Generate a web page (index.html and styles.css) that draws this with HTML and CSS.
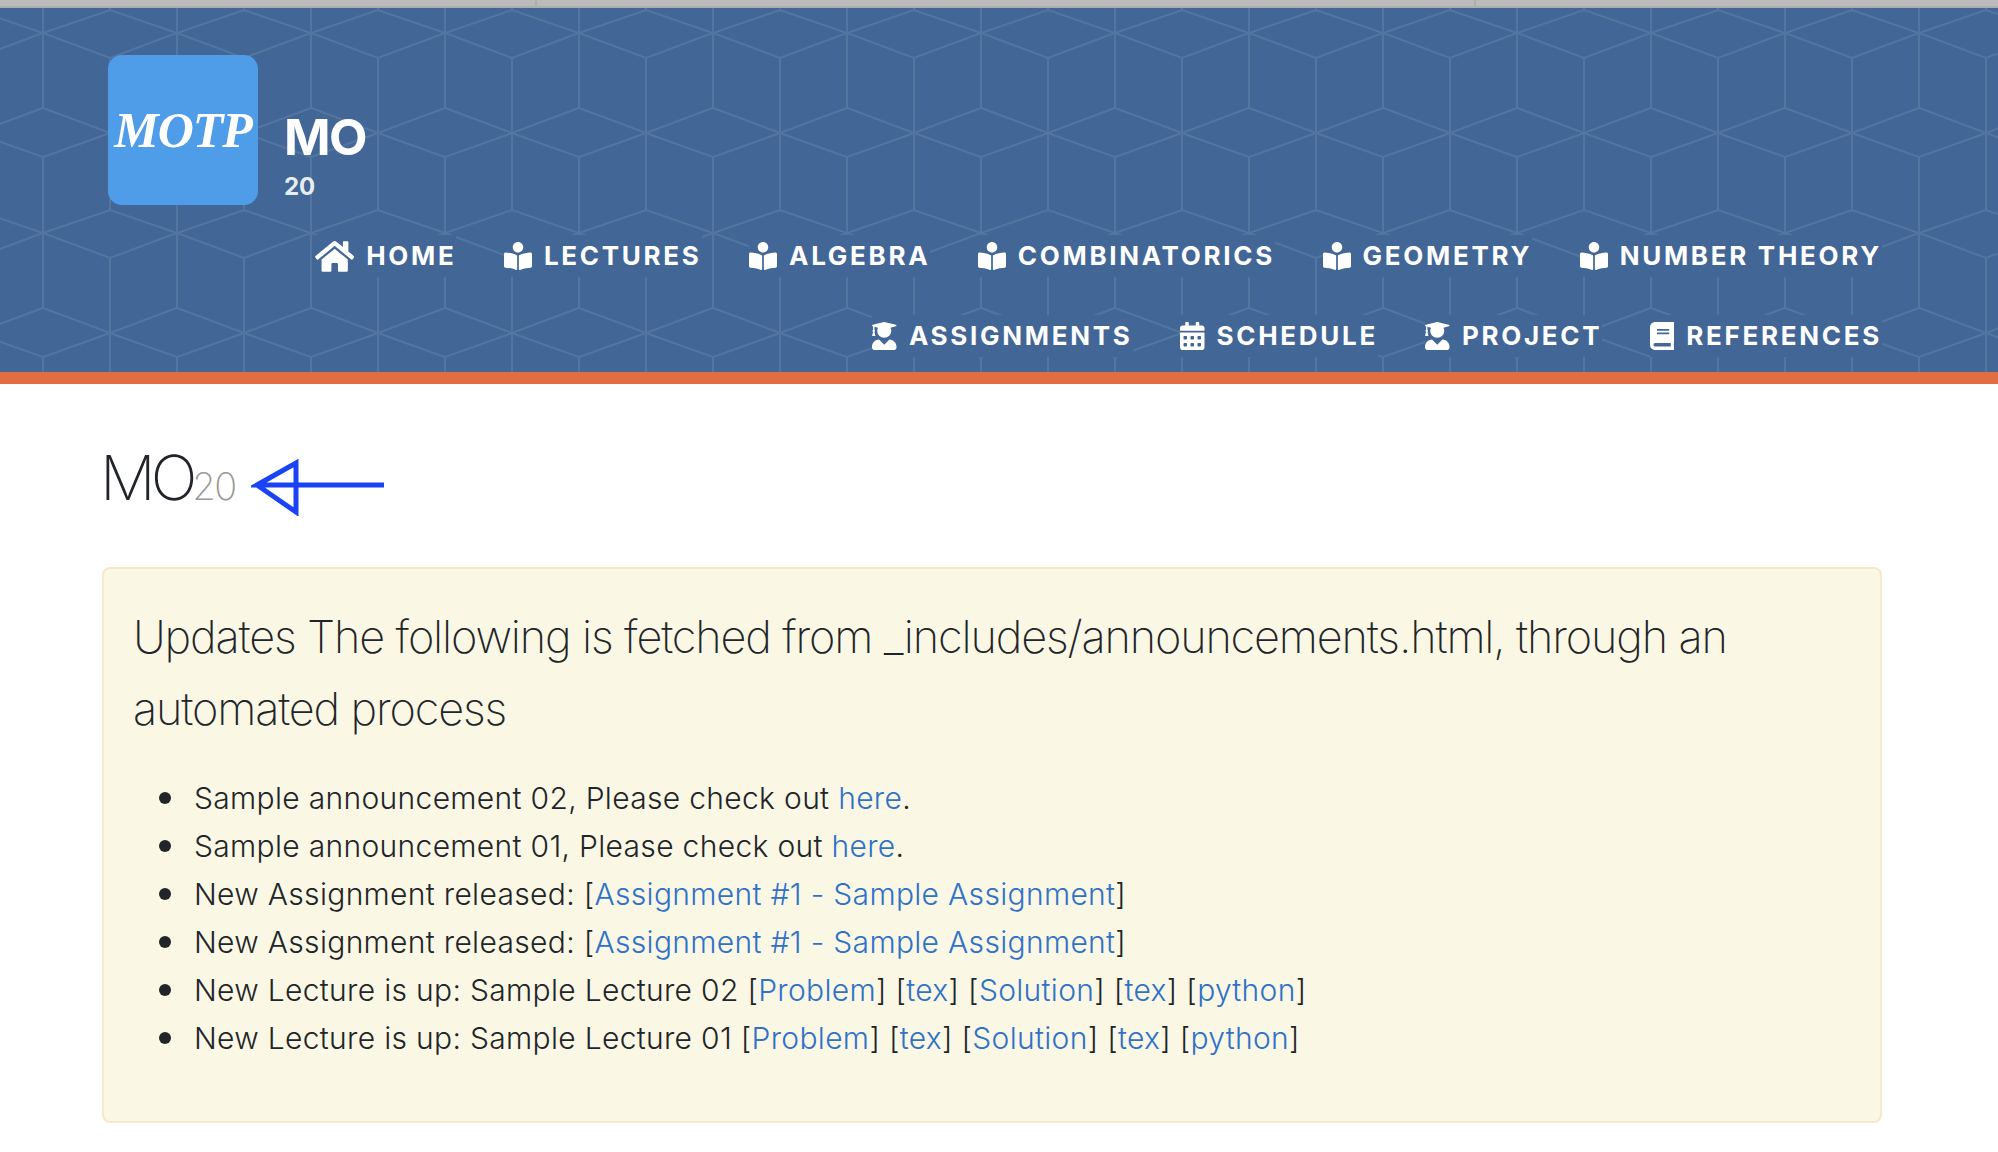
FILE: index.html
```html
<!DOCTYPE html>
<html lang="en">

<head>
    <meta charset="UTF-8">
    <title>MO20</title>
    <link rel="stylesheet" href="styles.css">
</head>

<body>
    <div class="tabstrip">
        <div class="tab tab-first"></div>
        <div class="tab tab-second"></div>
    </div>

    <header class="masthead">
        <div class="brand">
            <div class="logo">MOTP</div>
            <div class="brand-text">
                <div class="brand-title">MO</div>
                <div class="brand-sub">20</div>
            </div>
        </div>

        <nav class="nav">
            <div class="nav-row">
                <a class="nav-link" href="#">
                    <svg class="icon icon-home" viewBox="0 0 576 512"><path d="M280.37 148.26L96 300.11V464a16 16 0 0 0 16 16l112.06-.29a16 16 0 0 0 15.92-16V368a16 16 0 0 1 16-16h64a16 16 0 0 1 16 16v95.64a16 16 0 0 0 16 16.05L464 480a16 16 0 0 0 16-16V300L295.67 148.26a12.19 12.19 0 0 0-15.3 0zM571.6 251.47L488 182.56V44.05a12 12 0 0 0-12-12h-56a12 12 0 0 0-12 12v72.61L318.47 43a48 48 0 0 0-61 0L4.34 251.47a12 12 0 0 0-1.6 16.9l25.5 31A12 12 0 0 0 45.15 301l235.22-193.74a12.19 12.19 0 0 1 15.3 0L530.9 301a12 12 0 0 0 16.9-1.6l25.5-31a12 12 0 0 0-1.7-16.93z"/></svg>
                    HOME
                </a>
                <a class="nav-link" href="#">
                    <svg class="icon" viewBox="0 0 512 512"><use href="#reader"/></svg>
                    LECTURES
                </a>
                <a class="nav-link" href="#">
                    <svg class="icon" viewBox="0 0 512 512"><use href="#reader"/></svg>
                    ALGEBRA
                </a>
                <a class="nav-link" href="#">
                    <svg class="icon" viewBox="0 0 512 512"><use href="#reader"/></svg>
                    COMBINATORICS
                </a>
                <a class="nav-link" href="#">
                    <svg class="icon" viewBox="0 0 512 512"><use href="#reader"/></svg>
                    GEOMETRY
                </a>
                <a class="nav-link" href="#">
                    <svg class="icon" viewBox="0 0 512 512"><use href="#reader"/></svg>
                    NUMBER THEORY
                </a>
            </div>
            <div class="nav-row">
                <a class="nav-link" href="#">
                    <svg class="icon" viewBox="0 0 448 512"><use href="#graduate"/></svg>
                    ASSIGNMENTS
                </a>
                <a class="nav-link" href="#">
                    <svg class="icon" viewBox="0 0 448 512"><path d="M0 464c0 26.5 21.5 48 48 48h352c26.5 0 48-21.5 48-48V192H0v272zm320-196c0-6.6 5.4-12 12-12h40c6.6 0 12 5.4 12 12v40c0 6.6-5.4 12-12 12h-40c-6.6 0-12-5.4-12-12v-40zm0 128c0-6.6 5.4-12 12-12h40c6.6 0 12 5.4 12 12v40c0 6.6-5.4 12-12 12h-40c-6.6 0-12-5.4-12-12v-40zM192 268c0-6.6 5.4-12 12-12h40c6.6 0 12 5.4 12 12v40c0 6.6-5.4 12-12 12h-40c-6.6 0-12-5.4-12-12v-40zm0 128c0-6.6 5.4-12 12-12h40c6.6 0 12 5.4 12 12v40c0 6.6-5.4 12-12 12h-40c-6.6 0-12-5.4-12-12v-40zM64 268c0-6.6 5.4-12 12-12h40c6.6 0 12 5.4 12 12v40c0 6.6-5.4 12-12 12H76c-6.6 0-12-5.4-12-12v-40zm0 128c0-6.6 5.4-12 12-12h40c6.6 0 12 5.4 12 12v40c0 6.6-5.4 12-12 12H76c-6.6 0-12-5.4-12-12v-40zM400 64h-48V16c0-8.8-7.2-16-16-16h-32c-8.8 0-16 7.2-16 16v48H160V16c0-8.8-7.2-16-16-16h-32c-8.8 0-16 7.2-16 16v48H48C21.5 64 0 85.5 0 112v48h448v-48c0-26.5-21.5-48-48-48z"/></svg>
                    SCHEDULE
                </a>
                <a class="nav-link" href="#">
                    <svg class="icon" viewBox="0 0 448 512"><use href="#graduate"/></svg>
                    PROJECT
                </a>
                <a class="nav-link" href="#">
                    <svg class="icon" viewBox="0 0 448 512"><path d="M448 360V24c0-13.3-10.7-24-24-24H96C43 0 0 43 0 96v320c0 53 43 96 96 96h328c13.3 0 24-10.7 24-24v-16c0-7.5-3.5-14.3-8.9-18.7-4.2-15.4-4.2-59.3 0-74.7 5.4-4.3 8.9-11.1 8.9-18.6zM128 134c0-3.3 2.7-6 6-6h212c3.3 0 6 2.7 6 6v20c0 3.3-2.7 6-6 6H134c-3.3 0-6-2.7-6-6v-20zm0 64c0-3.3 2.7-6 6-6h212c3.3 0 6 2.7 6 6v20c0 3.3-2.7 6-6 6H134c-3.3 0-6-2.7-6-6v-20zm253.4 250H96c-17.7 0-32-14.3-32-32 0-17.6 14.4-32 32-32h285.4c-1.9 17.1-1.9 46.9 0 64z"/></svg>
                    REFERENCES
                </a>
            </div>
        </nav>
    </header>

    <main class="content">
        <div class="page-heading">
            <h1 class="page-title">MO<small>20</small></h1>
            <svg class="arrow" viewBox="0 0 140 77">
                <path d="M133 46H6L45 24V73L6 46"/>
            </svg>
        </div>

        <section class="notice">
            <p class="lead">Updates The following is fetched from _includes/announcements.html, through an automated process</p>
            <ul class="updates">
                <li>Sample announcement 02, Please check out <a href="#">here</a>.</li>
                <li>Sample announcement 01, Please check out <a href="#">here</a>.</li>
                <li>New Assignment released: [<a href="#">Assignment #1 - Sample Assignment</a>]</li>
                <li>New Assignment released: [<a href="#">Assignment #1 - Sample Assignment</a>]</li>
                <li>New Lecture is up: Sample Lecture 02 [<a href="#">Problem</a>] [<a href="#">tex</a>] [<a href="#">Solution</a>] [<a href="#">tex</a>] [<a href="#">python</a>]</li>
                <li>New Lecture is up: Sample Lecture 01 [<a href="#">Problem</a>] [<a href="#">tex</a>] [<a href="#">Solution</a>] [<a href="#">tex</a>] [<a href="#">python</a>]</li>
            </ul>
        </section>
    </main>

    <!-- shared icons -->
    <svg class="icon-defs">
        <defs>
            <path id="reader" d="M352 96c0-53.02-42.98-96-96-96s-96 42.98-96 96 42.98 96 96 96 96-42.98 96-96zM233.59 241.1c-59.33-36.32-155.43-46.3-203.79-49.05C13.55 191.13 0 203.51 0 219.14v222.8c0 14.33 11.59 26.28 26.49 27.05 43.66 2.29 131.99 10.68 193.04 41.43 9.37 4.72 20.48-1.71 20.48-11.87V252.56c-.01-4.67-2.32-8.95-6.42-11.46zm248.61-49.05c-48.35 2.74-144.46 12.73-203.78 49.05-4.1 2.51-6.41 6.96-6.41 11.63v245.79c0 10.19 11.14 16.63 20.54 11.9 61.04-30.72 149.32-39.11 192.97-41.4 14.9-.78 26.49-12.73 26.49-27.06V219.14c-.01-15.63-13.56-28.01-29.81-27.09z"/>
            <path id="graduate" d="M319.4 320.6L224 416l-95.4-95.4C57.1 323.7 0 382.2 0 454.4v9.6c0 26.5 21.5 48 48 48h352c26.5 0 48-21.5 48-48v-9.6c0-72.2-57.1-130.7-128.6-133.8zM13.6 79.8l6.4 1.5v58.4c-7 4.2-12 11.5-12 20.3 0 8.4 4.6 15.4 11.1 19.7L3.5 242c-1.7 6.9 2.1 14 7.6 14h41.8c5.5 0 9.3-7.1 7.6-14l-15.6-62.3C51.4 175.4 56 168.4 56 160c0-8.8-5-16.1-12-20.3V87.1l66 15.9c-8.6 17.2-14 36.4-14 57 0 70.7 57.3 128 128 128s128-57.3 128-128c0-20.6-5.3-39.8-14-57l96.3-23.2c18.2-4.4 18.2-27.1 0-31.5l-190.4-46c-13-3.1-26.7-3.1-39.7 0L13.6 48.2c-18.1 4.4-18.1 27.2 0 31.6z"/>
        </defs>
    </svg>
</body>

</html>
```

FILE: styles.css
```css
* {
    box-sizing: border-box;
}

body {
    margin: 0;
    font-family: Inter, "Liberation Sans", sans-serif;
    font-size: 30px;
    line-height: 48px;
    color: #212529;
    background-color: #ffffff;
}

a {
    color: #2f72c8;
    text-decoration: none;
}

.tabstrip {
    display: flex;
    height: 8px;
    background-color: #bbbbbb;
    border-bottom: 2px solid #aeaeae;
}

.tab {
    border-right: 2px solid #adadad;
}

.tab-first {
    width: 537px;
}

.tab-second {
    width: 939px;
}

.masthead {
    height: 376px;
    padding: 47px 116px 0 108px;
    background-color: #426796;
    background-image: url("data:image/svg+xml,%3Csvg xmlns='http://www.w3.org/2000/svg' width='134' height='200' fill='none' stroke='%23ffffff' stroke-opacity='.09' stroke-width='2'%3E%3Cpath d='M0 0V75M0 124V200M134 0V75M134 124V200M67 25V177M0 0L67 25L134 0M0 75L67 100L134 75M0 124L67 100L134 124M0 200L67 177L134 200'/%3E%3C/svg%3E");
    background-position: 43px 25px;
    border-bottom: 12px solid #e36d42;
}

.brand {
    display: flex;
    align-items: flex-end;
    gap: 26px;
}

.logo {
    display: flex;
    align-items: center;
    justify-content: center;
    width: 150px;
    height: 150px;
    border-radius: 14px;
    background-color: #4f9ce8;
    color: #ffffff;
    font-family: "Liberation Serif", serif;
    font-size: 50px;
    font-style: italic;
    font-weight: 700;
    letter-spacing: -1px;
}

.brand-title {
    margin-bottom: 5px;
    color: #ffffff;
    font-size: 50px;
    font-weight: 700;
    line-height: 54px;
    letter-spacing: -1.5px;
}

.brand-sub {
    color: rgba(255, 255, 255, .9);
    font-size: 24px;
    font-weight: 700;
    line-height: 36px;
}

.nav {
    display: flex;
    flex-direction: column;
    gap: 38px;
    margin-top: 30px;
}

.nav-row {
    display: flex;
    justify-content: flex-end;
    gap: 47.5px;
}

.nav-link {
    display: flex;
    align-items: center;
    gap: 12px;
    height: 42px;
    background-color: #426796;
    color: #ffffff;
    font-size: 26px;
    font-weight: 700;
    letter-spacing: 2.7px;
    white-space: nowrap;
}

.icon {
    height: 28px;
    fill: #ffffff;
}

.icon-home {
    height: 35px;
}

.icon-defs {
    display: none;
}

.content {
    padding: 55px 116px 0 102px;
}

.page-heading {
    display: flex;
    gap: 15px;
    margin-bottom: 51px;
}

.page-title {
    margin: 0 0 0 -2px;
    font-size: 62px;
    font-weight: 200;
    line-height: 77px;
    letter-spacing: -5px;
}

.page-title small {
    color: #999999;
    font-size: 38px;
    line-height: 0;
    letter-spacing: -1.5px;
}

.arrow {
    width: 140px;
    height: 77px;
    fill: none;
    stroke: #1a43f5;
    stroke-width: 5;
}

.notice {
    padding: 32px 30px 31px 29px;
    background-color: #fbf7e5;
    border: 2px solid #f6e8c8;
    border-radius: 8px;
}

.lead {
    margin: 0 0 29px;
    font-size: 45px;
    font-weight: 250;
    line-height: 72px;
    letter-spacing: -1.15px;
}

.updates {
    margin: 0 0 28px;
    padding-left: 61px;
    list-style: none;
    font-weight: 350;
    letter-spacing: .32px;
}

.updates li::before {
    content: "";
    display: inline-block;
    width: 12px;
    height: 12px;
    margin-left: -35px;
    margin-right: 23px;
    border-radius: 50%;
    background-color: #212529;
    vertical-align: 5px;
}
```
